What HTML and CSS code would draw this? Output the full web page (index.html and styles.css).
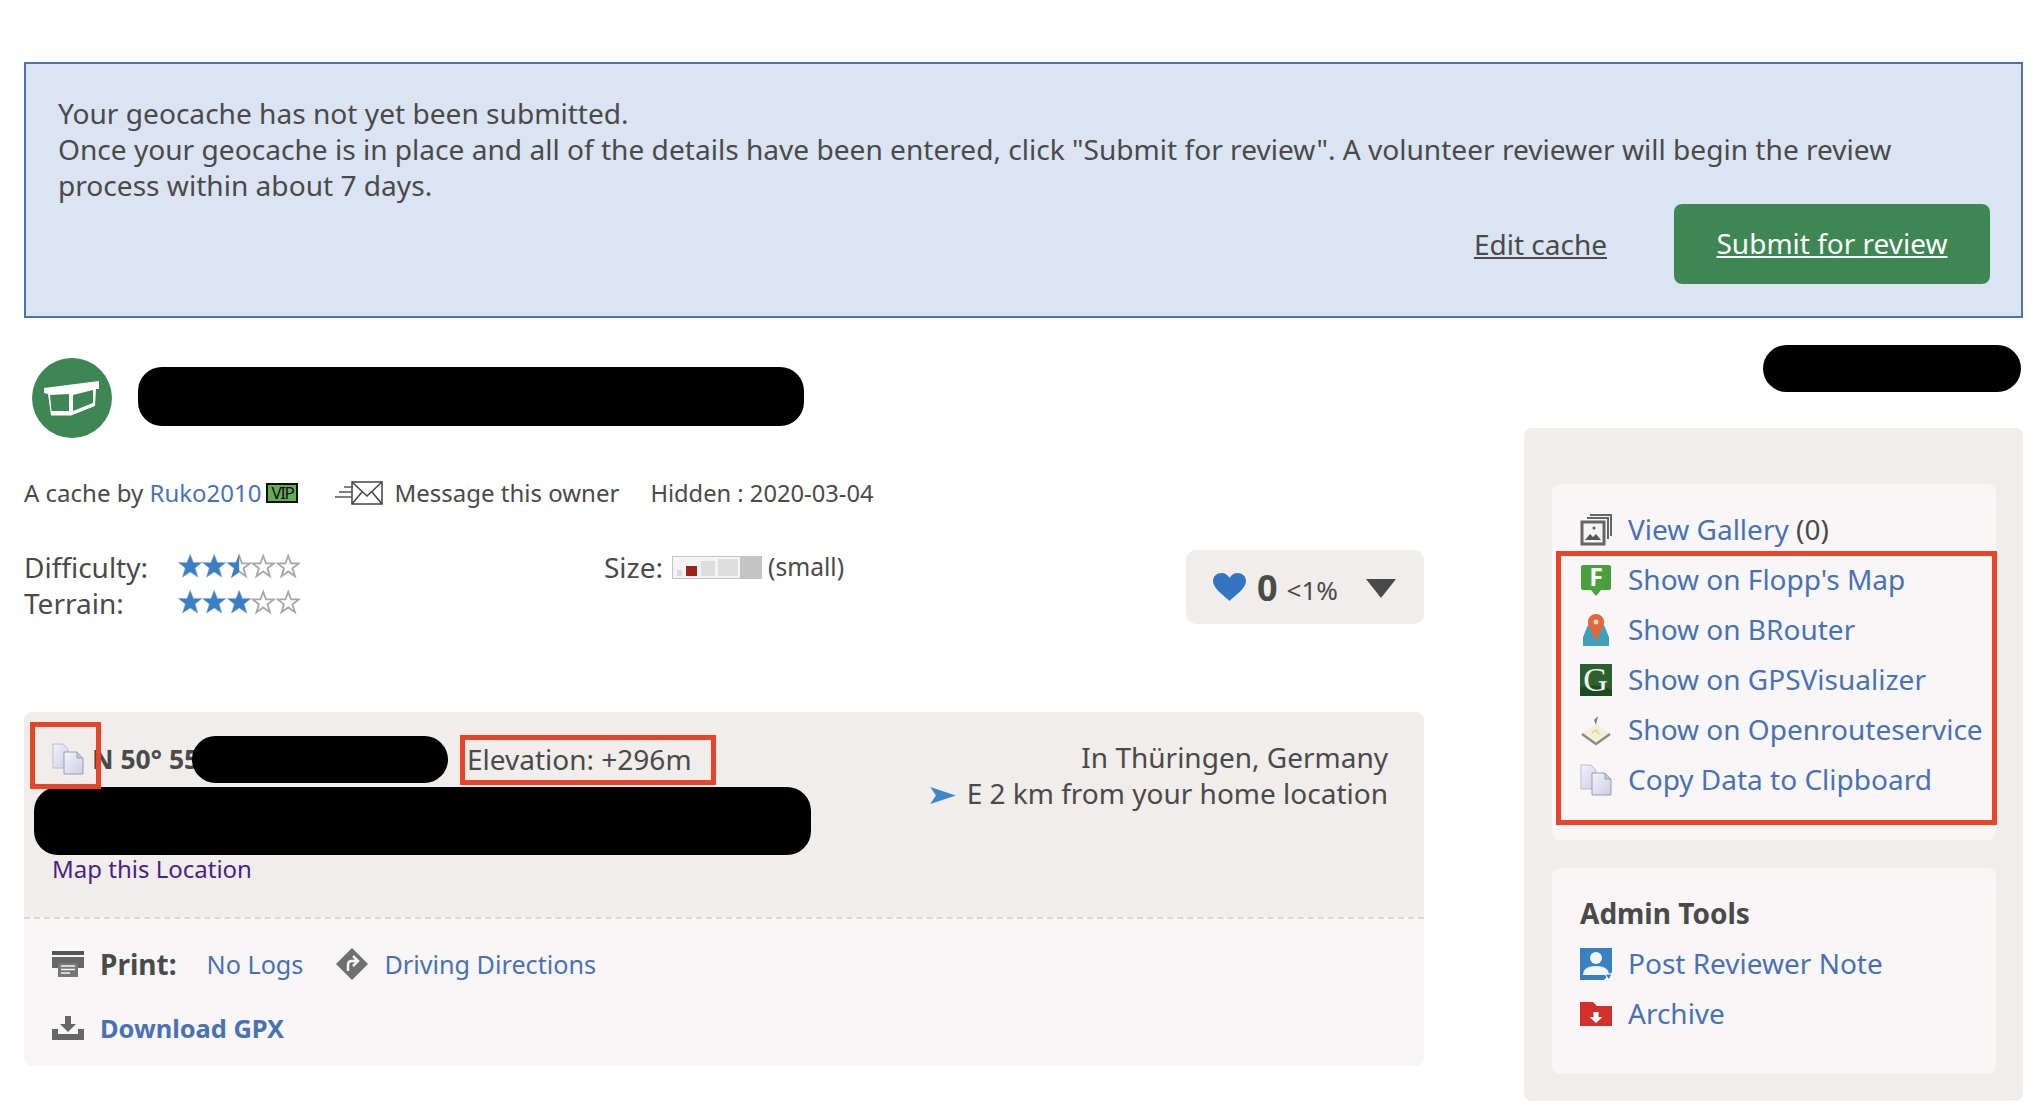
FILE: index.html
```html
<!DOCTYPE html>
<html lang="en">
<head>
    <meta charset="UTF-8">
    <meta name="viewport" content="width=device-width, initial-scale=1.0">
    <title>Geocache details</title>
    <link rel="stylesheet" href="styles.css">
</head>
<body>
    <!-- Shared icons -->
    <svg class="defs" width="0" height="0">
        <defs>
            <linearGradient id="pageFill" x1="0" y1="0" x2="1" y2="1">
                <stop offset="0" stop-color="#f4f4fc"/>
                <stop offset="1" stop-color="#cdcde4"/>
            </linearGradient>
            <symbol id="copy" viewBox="0 0 32 32">
                <path d="M1 1h10l5 5v19H1z" fill="url(#pageFill)" stroke="#bcbcd2"/>
                <path d="M12 9h13l6 6v16H12z" fill="url(#pageFill)" stroke="#9c9cb6"/>
                <path d="M25 9v6h6" fill="#c4c4d6" stroke="#9c9cb6"/>
            </symbol>
            <symbol id="starFull" viewBox="0 0 24 24">
                <path d="M12 .5l3.200 8h8.500l-6.800 5.400 2.700 9.100L12 18l-7.600 5 2.700-9.100L.3 8.500h8.500z" fill="#3b7ec2" stroke="#8fb3d8" stroke-width=".6"/>
            </symbol>
            <symbol id="starEmpty" viewBox="0 0 24 24">
                <path d="M12 2l2.800 7.500h7.600l-6.200 4.800 2.400 7.800L12 17.300l-6.600 4.800 2.400-7.800-6.200-4.800h7.600z" fill="#fff" stroke="#a8a8a8" stroke-width="1.800"/>
            </symbol>
            <symbol id="starHalf" viewBox="0 0 24 24">
                <path d="M12 2l2.800 7.500h7.600l-6.200 4.800 2.400 7.800L12 17.300l-6.600 4.800 2.400-7.800-6.200-4.800h7.600z" fill="#fff" stroke="#a8a8a8" stroke-width="1.800"/>
                <path d="M12 .5V18l-7.600 5 2.700-9.100L.3 8.500h8.500z" fill="#3b7ec2"/>
            </symbol>
        </defs>
    </svg>

    <div class="page">
        <div class="notice">
            <p>Your geocache has not yet been submitted.<br>
            Once your geocache is in place and all of the details have been entered, click "Submit for review". A volunteer reviewer will begin the review process within about 7 days.</p>
            <div class="notice-actions">
                <a class="edit-link" href="#">Edit cache</a>
                <a class="submit-btn" href="#">Submit for review</a>
            </div>
        </div>

        <div class="main">
            <div class="content">
                <div class="title-row">
                    <div class="cache-type">
                        <svg width="56" height="35" viewBox="0 0 56 35">
                            <path d="M0 7L55 0v8h-3l-1 17-24 9.500H7L4 13l-4-1z" fill="#fff"/>
                            <path d="M6 14l19-1v17H7.500z" fill="#3e8654"/>
                            <path d="M29 14l20-5v13l-20 8z" fill="#3e8654"/>
                        </svg>
                    </div>
                    <div class="redact redact-title"></div>
                </div>

                <div class="meta-row">
                    <span>A cache by <a href="#">Ruko2010</a></span>
                    <span class="vip">VIP</span>
                    <svg class="envelope" width="48" height="24" viewBox="0 0 48 24">
                        <rect x="17" y="1" width="30" height="22" fill="#fff" stroke="#444" stroke-width="1.500"/>
                        <path d="M17 1l15 14L47 1M17 23l10-12M47 23L37 11" fill="none" stroke="#444" stroke-width="1.500"/>
                        <path d="M9 6h9M4 11h13M0 16h17" stroke="#555" stroke-width="1.500"/>
                    </svg>
                    <span class="message-text">Message this owner</span>
                    <span class="hidden-date">Hidden : 2020-03-04</span>
                </div>

                <div class="rating-row">
                    <div class="ratings">
                        <div class="rating-line">
                            <span class="rating-label">Difficulty:</span>
                            <span class="stars">
                                <svg><use href="#starFull"/></svg><svg><use href="#starFull"/></svg><svg><use href="#starHalf"/></svg><svg><use href="#starEmpty"/></svg><svg><use href="#starEmpty"/></svg>
                            </span>
                        </div>
                        <div class="rating-line">
                            <span class="rating-label">Terrain:</span>
                            <span class="stars">
                                <svg><use href="#starFull"/></svg><svg><use href="#starFull"/></svg><svg><use href="#starFull"/></svg><svg><use href="#starEmpty"/></svg><svg><use href="#starEmpty"/></svg>
                            </span>
                        </div>
                    </div>
                    <div class="size">
                        <span>Size:</span>
                        <svg width="90" height="23" viewBox="0 0 90 23">
                            <rect width="90" height="23" fill="#c4c4c4"/>
                            <rect x="1" y="1" width="67" height="21" fill="#f4f4f4"/>
                            <rect x="5" y="14" width="5" height="6" fill="#dcdcdc"/>
                            <rect x="14" y="10" width="11" height="10" fill="#9c2318"/>
                            <rect x="29" y="5" width="14" height="15" fill="#dedede"/>
                            <rect x="46" y="3" width="20" height="17" fill="#dedede"/>
                        </svg>
                        <span class="size-name">(small)</span>
                    </div>
                    <div class="favorites">
                        <svg width="33" height="28" viewBox="0 0 33 28">
                            <path d="M16.500 28C12 23 0 16 0 8 0 3 4 0 8.500 0c3.500 0 6.500 2 8 5 1.500-3 4.500-5 8-5C29 0 33 3 33 8c0 8-12 15-16.500 20z" fill="#3276c2"/>
                        </svg>
                        <span class="fav-count">0</span>
                        <span class="fav-percent">&lt;1%</span>
                        <span class="fav-arrow"></span>
                    </div>
                </div>

                <div class="location">
                    <div class="location-top">
                        <div class="coords">
                            <div class="coord-row">
                                <svg class="copy-icon"><use href="#copy"/></svg>
                                <strong>N 50° 55</strong>
                                <span class="elevation">Elevation: +296m</span>
                            </div>
                            <div class="redact redact-utm"></div>
                            <a class="visited" href="#">Map this Location</a>
                        </div>
                        <div class="place">
                            <div>In Thüringen, Germany</div>
                            <div>
                                <svg width="26" height="17" viewBox="0 0 27 18">
                                    <path d="M0 0l27 9L0 18l6-9z" fill="#3b87c9"/>
                                </svg>
                                E 2 km from your home location
                            </div>
                        </div>
                        <!-- Annotations and redactions drawn over the row -->
                        <div class="redact redact-coords"></div>
                        <div class="mark mark-copy"></div>
                        <div class="mark mark-elevation"></div>
                    </div>
                    <div class="location-bottom">
                        <div class="print-row">
                            <svg width="32" height="26" viewBox="0 0 32 26">
                                <path d="M0 0h32v4H0z" fill="#555"/>
                                <path d="M0 6h32v11H26v-3H6v3H0z" fill="#666"/>
                                <path d="M6 12h20v14H6z" fill="#777"/>
                                <path d="M9 15h14M9 18.500h14M9 22h9" stroke="#f8f6f6" stroke-width="1.500"/>
                            </svg>
                            <strong>Print:</strong>
                            <a class="no-logs" href="#">No Logs</a>
                            <svg width="32" height="32" viewBox="0 0 32 32">
                                <path d="M16 0l16 16-16 16L0 16z" fill="#6f6f6f"/>
                                <path d="M12 23v-6q0-4 4-4h4M17 8l5 5-5 5" fill="none" stroke="#f8f6f6" stroke-width="2.500"/>
                            </svg>
                            <a href="#">Driving Directions</a>
                        </div>
                        <div class="download-row">
                            <svg width="32" height="24" viewBox="0 0 32 24">
                                <path d="M13 0h6v8h5l-8 8-8-8h5z" fill="#666"/>
                                <path d="M0 13h6v5h20v-5h6v11H0z" fill="#666"/>
                            </svg>
                            <a href="#"><strong>Download GPX</strong></a>
                        </div>
                    </div>
                </div>
            </div>

            <div class="side">
                <div class="redact redact-side"></div>
                <div class="panel">
                    <div class="card card-links">
                        <div class="link-row">
                            <svg viewBox="0 0 32 32">
                                <path d="M10 1h21v21M7 4h21v21" fill="none" stroke="#666" stroke-width="2"/>
                                <rect x="2" y="8" width="22" height="22" fill="#f4f4f4" stroke="#666" stroke-width="3"/>
                                <path d="M5 26l5-6 3 3 3-3 5 6z" fill="#555"/>
                                <circle cx="14" cy="14" r="1.500" fill="#555"/>
                            </svg>
                            <span><a href="#">View Gallery</a> (0)</span>
                        </div>
                        <div class="link-row">
                            <svg viewBox="0 0 32 32">
                                <path d="M3 1h26q2 0 2 2v21q0 2-2 2h-8l-5 6-5-6H3q-2 0-2-2V3q0-2 2-2z" fill="#4ba03c"/>
                                <text x="16" y="22" text-anchor="middle" class="flopp-letter">F</text>
                            </svg>
                            <a href="#">Show on Flopp's Map</a>
                        </div>
                        <div class="link-row">
                            <svg viewBox="0 0 32 32">
                                <path d="M8 11h16l5 12v9H3v-9z" fill="#3f9fbc"/>
                                <path d="M16 0c5 0 8 4 8 8 0 6-5 10-8 20-3-10-8-14-8-20 0-4 3-8 8-8z" fill="#e2673a"/>
                                <circle cx="16" cy="8" r="2.500" fill="#f5d8c8"/>
                            </svg>
                            <a href="#">Show on BRouter</a>
                        </div>
                        <div class="link-row">
                            <svg viewBox="0 0 32 32">
                                <rect width="32" height="32" fill="#2d6230"/>
                                <path d="M0 24q16-6 32 2v6H0z" fill="#1d4a20"/>
                                <text x="15.500" y="27" text-anchor="middle" class="g-letter">G</text>
                            </svg>
                            <a href="#">Show on GPSVisualizer</a>
                        </div>
                        <div class="link-row">
                            <svg viewBox="0 0 32 32">
                                <path d="M3 19L16 10l13 9-13 8z" fill="#f6efd8"/>
                                <path d="M2 20l14 10 14-10" fill="none" stroke="#8c8c7c" stroke-width="2.500"/>
                                <path d="M16 11l2-9-4 4z" fill="#808080"/>
                                <path d="M12 19l4-3 3 4" fill="none" stroke="#e2d49a" stroke-width="1.500"/>
                            </svg>
                            <a href="#">Show on Openrouteservice</a>
                        </div>
                        <div class="link-row">
                            <svg><use href="#copy"/></svg>
                            <a href="#">Copy Data to Clipboard</a>
                        </div>
                        <div class="mark mark-links"></div>
                    </div>
                    <div class="card card-admin">
                        <h3>Admin Tools</h3>
                        <div class="link-row">
                            <svg viewBox="0 0 32 32">
                                <rect width="32" height="32" fill="#3a81c4"/>
                                <circle cx="16" cy="10" r="6" fill="#f2f6fa"/>
                                <path d="M3 27c0-6 5-9 13-9s13 3 13 9z" fill="#f2f6fa"/>
                                <path d="M24 32l8-8v8z" fill="#fff"/>
                                <path d="M25 26h7l-3 6z" fill="#3a81c4" stroke="#fff"/>
                            </svg>
                            <a href="#">Post Reviewer Note</a>
                        </div>
                        <div class="link-row">
                            <svg viewBox="0 0 32 32">
                                <path d="M0 4h13l4 4h15v20H0z" fill="#d42f2a"/>
                                <path d="M13.500 14h5v5h4L16 25l-6.500-6h4z" fill="#fff"/>
                            </svg>
                            <a href="#">Archive</a>
                        </div>
                    </div>
                </div>
            </div>
        </div>
    </div>
</body>
</html>
```

FILE: styles.css
```css
body {
    font-family: "Noto Sans", Arial, sans-serif;
    font-size: 28px;
    line-height: 36px;
    color: #4a4a4a;
    background-color: #fff;
    margin: 0;
}
a {
    color: #4a72b2;
    text-decoration: none;
}
strong {
    font-weight: 700;
}
.defs {
    position: absolute;
}
.page {
    padding: 62px 13px 0 24px;
}
.redact {
    background: #000;
    border-radius: 24px;
}
.mark {
    position: absolute;
    border: 5px solid #e8442a;
    box-sizing: border-box;
}

/* Notice */
.notice {
    border: 2px solid #4a72b2;
    background-color: #dae4f2;
    padding: 31px 31px 32px 32px;
}
.notice p {
    margin: 0 0 1px;
    font-size: 28.1px;
}
.notice-actions {
    display: flex;
    justify-content: flex-end;
    align-items: center;
    gap: 67px;
}
.edit-link {
    color: #4a4a4a;
    text-decoration: underline;
}
.submit-btn {
    width: 316px;
    height: 80px;
    line-height: 78px;
    text-align: center;
    background-color: #3e8654;
    color: #fff;
    border-radius: 8px;
    text-decoration: underline;
}

/* Two columns */
.main {
    display: flex;
    justify-content: space-between;
}
.content {
    width: 1400px;
}
.side {
    width: 499px;
}

/* Title */
.title-row {
    display: flex;
    align-items: flex-start;
    gap: 26px;
    margin: 40px 0 0 8px;
}
.cache-type {
    width: 80px;
    height: 80px;
    border-radius: 50%;
    background-color: #3e8654;
    display: flex;
    align-items: center;
    justify-content: center;
}
.redact-title {
    width: 666px;
    height: 59px;
    margin-top: 9px;
}

/* Owner line */
.meta-row {
    display: flex;
    align-items: center;
    margin-top: 37px;
    font-size: 24px;
}
.vip {
    width: 32px;
    height: 20px;
    margin-left: 5px;
    box-sizing: border-box;
    border: 2px solid #111;
    background-color: #6aa85a;
    color: #111;
    font-size: 17px;
    line-height: 16px;
    letter-spacing: -1.5px;
    text-align: center;
}
.envelope {
    margin-left: 37px;
}
.message-text {
    margin-left: 11px;
}
.hidden-date {
    margin-left: 31px;
    font-size: 23.7px;
}

/* Difficulty, terrain, size, favorites */
.rating-row {
    display: flex;
    align-items: flex-start;
    margin-top: 39px;
}
.ratings {
    width: 580px;
    margin-top: -1px;
}
.rating-line {
    display: flex;
    align-items: center;
}
.rating-label {
    width: 154px;
}
.stars {
    display: flex;
    margin-top: -2px;
}
.stars svg {
    width: 24.4px;
    height: 26px;
}
.size {
    display: flex;
    align-items: center;
    gap: 9px;
    margin-top: -1px;
}
.size-name {
    margin-left: -3px;
    font-size: 24.6px;
}
.favorites {
    margin-left: auto;
    width: 238px;
    height: 74px;
    box-sizing: border-box;
    padding-left: 27px;
    display: flex;
    align-items: center;
    background-color: #f0edeb;
    border-radius: 10px;
}
.fav-count {
    margin: 2px 0 0 11px;
    font-size: 36px;
    font-weight: 700;
}
.fav-percent {
    margin: 6px 0 0 9px;
    font-size: 26px;
}
.fav-arrow {
    margin: 3px 0 0 28px;
    border-left: 15px solid transparent;
    border-right: 15px solid transparent;
    border-top: 19px solid #4a4a4a;
}

/* Location box */
.location {
    margin-top: 88px;
}
.location-top {
    position: relative;
    height: 205px;
    box-sizing: border-box;
    padding: 28px 36px 0 28px;
    display: flex;
    justify-content: space-between;
    background-color: #f0edeb;
    border-radius: 8px 8px 0 0;
}
.coord-row {
    display: flex;
    align-items: center;
}
.copy-icon {
    width: 32px;
    height: 32px;
    flex: none;
}
.coord-row strong {
    width: 375px;
    flex: none;
    margin-left: 8px;
    font-size: 26.5px;
}
.elevation {
    white-space: nowrap;
    margin-top: 1px;
}
.redact-utm {
    width: 777px;
    height: 68px;
    margin: 10px 0 0 -18px;
}
.coords .visited {
    font-size: 24px;
    display: block;
    margin-top: -4px;
    color: #4b1f86;
}
.place {
    text-align: right;
    margin-top: -1px;
}
.place svg {
    margin-right: 3px;
}
.redact-coords {
    position: absolute;
    left: 168px;
    top: 24px;
    width: 256px;
    height: 47px;
}
.mark-copy {
    left: 6px;
    top: 10px;
    width: 71px;
    height: 67px;
}
.mark-elevation {
    left: 436px;
    top: 23px;
    width: 256px;
    height: 50px;
}
.location-bottom {
    height: 149px;
    box-sizing: border-box;
    padding: 27px 28px 0;
    font-size: 25.2px;
    background-color: #f8f6f6;
    border-top: 2px dashed #d8d8d8;
    border-radius: 0 0 8px 8px;
}
.print-row,
.download-row {
    display: flex;
    align-items: center;
}
.print-row strong {
    margin: 0 30px 0 16px;
    font-size: 28px;
}
.no-logs {
    margin-right: 33px;
}
.print-row a + svg + a {
    margin-left: 16px;
}
.download-row {
    margin-top: 28px;
}
.download-row a {
    margin-left: 16px;
    font-size: 25.4px;
}

/* Sidebar */
.redact-side {
    width: 258px;
    height: 47px;
    margin: 27px 2px 0 auto;
}
.panel {
    margin-top: 36px;
    height: 673px;
    box-sizing: border-box;
    padding: 56px 27px 28px 28px;
    background-color: #f0edeb;
    border-radius: 8px;
}
.card {
    position: relative;
    background-color: #f8f6f6;
    border-radius: 8px;
    padding: 21px 0 35px 28px;
}
.card-admin {
    margin-top: 28px;
    padding: 27px 0 35px 28px;
}
.card h3 {
    margin: 0 0 8px;
    font-size: 28px;
    font-weight: 700;
}
.link-row {
    display: flex;
    align-items: center;
    gap: 16px;
    height: 50px;
    white-space: nowrap;
}
.link-row > a,
.link-row > span {
    margin-bottom: 3px;
}
.link-row svg {
    width: 32px;
    height: 32px;
    flex: none;
    overflow: visible;
}
.flopp-letter {
    fill: #fff;
    font-family: "Noto Sans", Arial, sans-serif;
    font-size: 25px;
    font-weight: 700;
}
.g-letter {
    fill: #f2f2ea;
    font-family: "Liberation Serif", serif;
    font-size: 34px;
}
.mark-links {
    left: 4px;
    top: 67px;
    width: 441px;
    height: 274px;
}
```
